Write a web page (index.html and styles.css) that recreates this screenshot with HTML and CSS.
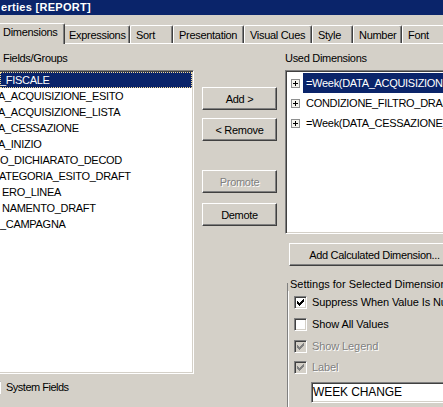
FILE: index.html
```
<!DOCTYPE html>
<html>
<head>
<meta charset="utf-8">
<title>Properties [REPORT]</title>
<link rel="stylesheet" href="styles.css">
</head>
<body>
<div class="window">
  <div class="titlebar"><span class="title">erties [REPORT]</span></div>
  <div class="tabstrip">
    <div class="tab sel w-dim">Dimensions</div>
    <div class="tab w-exp">Expressions</div>
    <div class="tab w-sort">Sort</div>
    <div class="tab w-pres">Presentation</div>
    <div class="tab w-vc">Visual Cues</div>
    <div class="tab w-style">Style</div>
    <div class="tab w-num">Number</div>
    <div class="tab w-font">Font</div>
  </div>
  <div class="panel">
    <div class="col-left">
      <div class="label">Fields/Groups</div>
      <div class="listbox fields">
        <div class="item selected">_FISCALE</div>
        <div class="item cut">A_ACQUISIZIONE_ESITO</div>
        <div class="item cut">A_ACQUISIZIONE_LISTA</div>
        <div class="item cut">A_CESSAZIONE</div>
        <div class="item cut">A_INIZIO</div>
        <div class="item">O_DICHIARATO_DECOD</div>
        <div class="item cut1">ATEGORIA_ESITO_DRAFT</div>
        <div class="item in">ERO_LINEA</div>
        <div class="item in">NAMENTO_DRAFT</div>
        <div class="item">_CAMPAGNA</div>
      </div>
      <div class="check-row sys">
        <span class="checkbox"></span>
        <span class="sys-text">System Fields</span>
      </div>
    </div>
    <div class="col-mid">
      <button class="btn b-add">Add &gt;</button>
      <button class="btn b-remove">&lt; Remove</button>
      <button class="btn b-promote disabled">Promote</button>
      <button class="btn b-demote">Demote</button>
    </div>
    <div class="col-right">
      <div class="label">Used Dimensions</div>
      <div class="listbox used">
        <div class="tree-row">
          <svg class="plus" width="9" height="9" viewBox="0 0 9 9"><rect x="0.5" y="0.5" width="8" height="8" fill="#f4f3ee" stroke="#8e8f8f"/><path d="M2 4h5v1H2z M4 2h1v5H4z" fill="#000"/></svg>
          <span class="node selected">=Week(DATA_ACQUISIZIONE_ESITO)</span>
        </div>
        <div class="tree-row">
          <svg class="plus" width="9" height="9" viewBox="0 0 9 9"><rect x="0.5" y="0.5" width="8" height="8" fill="#f4f3ee" stroke="#8e8f8f"/><path d="M2 4h5v1H2z M4 2h1v5H4z" fill="#000"/></svg>
          <span class="node">CONDIZIONE_FILTRO_DRAFT</span>
        </div>
        <div class="tree-row">
          <svg class="plus" width="9" height="9" viewBox="0 0 9 9"><rect x="0.5" y="0.5" width="8" height="8" fill="#f4f3ee" stroke="#8e8f8f"/><path d="M2 4h5v1H2z M4 2h1v5H4z" fill="#000"/></svg>
          <span class="node">=Week(DATA_CESSAZIONE)</span>
        </div>
      </div>
      <button class="btn b-calc">Add Calculated Dimension...</button>
      <div class="group">
        <span class="legend">Settings for Selected Dimension</span>
        <div class="check-row r1">
          <span class="checkbox"><svg width="7" height="7" viewBox="0 0 7 7"><path d="M0 2h1v3H0z M1 3h1v3H1z M2 4h1v3H2z M3 3h1v3H3z M4 2h1v3H4z M5 1h1v3H5z M6 0h1v3H6z" fill="#000"/></svg></span>
          <span>Suppress When Value Is Null</span>
        </div>
        <div class="check-row r2">
          <span class="checkbox"></span>
          <span>Show All Values</span>
        </div>
        <div class="check-row r3 disabled">
          <span class="checkbox"><svg width="7" height="7" viewBox="0 0 7 7"><path d="M0 2h1v3H0z M1 3h1v3H1z M2 4h1v3H2z M3 3h1v3H3z M4 2h1v3H4z M5 1h1v3H5z M6 0h1v3H6z" fill="#808080"/></svg></span>
          <span class="dis-text">Show Legend</span>
        </div>
        <div class="check-row r4 disabled">
          <span class="checkbox"><svg width="7" height="7" viewBox="0 0 7 7"><path d="M0 2h1v3H0z M1 3h1v3H1z M2 4h1v3H2z M3 3h1v3H3z M4 2h1v3H4z M5 1h1v3H5z M6 0h1v3H6z" fill="#808080"/></svg></span>
          <span class="dis-text">Label</span>
        </div>
        <div class="textbox">WEEK CHANGE</div>
      </div>
    </div>
  </div>
</div>
</body>
</html>
```

FILE: styles.css
```
html, body {
  margin: 0;
  padding: 0;
  overflow: hidden;
  background: #d4d0c8;
}

body {
  width: 443px;
  height: 407px;
  font-family: "Liberation Sans", Arial, sans-serif;
  font-size: 11px;
  letter-spacing: -0.3px;
  color: #000;
}

.window {
  width: 443px;
  height: 407px;
  overflow: hidden;
}

.titlebar {
  height: 15px;
  line-height: 15px;
  background: #0a246a;
  color: #fff;
  font-weight: bold;
  letter-spacing: 0.3px;
  padding-left: 1px;
  white-space: nowrap;
}

/* tabs */
.tabstrip {
  display: flex;
  align-items: flex-end;
  height: 28px;
  border-bottom: 1px solid #fff;
  white-space: nowrap;
}

.tab {
  flex: none;
  box-sizing: border-box;
  height: 18px;
  padding: 3px 0 1px 5px;
  line-height: 13px;
  border-top: 1px solid #fff;
  border-left: 1px solid #fff;
  border-right: 1px solid #404040;
  border-radius: 2px 2px 0 0;
  box-shadow: inset -1px 0 #808080;
  background: #d4d0c8;
}

.tab.sel {
  position: relative;
  z-index: 1;
  height: 21px;
  padding-top: 2px;
  padding-bottom: 5px;
  margin-bottom: -1px;
  margin-left: -3px;
  margin-right: -2px;
}

.w-dim { width: 68px; }
.w-exp { width: 67px; }
.w-sort { width: 43px; }
.w-pres { width: 71px; }
.w-vc { width: 68px; }
.w-style { width: 41px; }
.w-num { width: 49px; }
.w-font { width: 60px; }

/* panel */
.panel {
  display: flex;
  padding-top: 8px;
  white-space: nowrap;
}

.label {
  height: 13px;
  line-height: 13px;
  margin-bottom: 5px;
}

.col-left {
  flex: none;
  width: 194px;
}

.col-left .label {
  padding-left: 3px;
}

.listbox {
  box-sizing: border-box;
  background: #fff;
  border: 1px solid;
  border-color: #808080 #fff #fff #808080;
  box-shadow: inset 1px 1px #404040, inset -1px -1px #d4d0c8;
  padding: 1px;
  overflow: hidden;
}

.listbox.fields {
  width: 196px;
  height: 304px;
  margin-left: -2px;
}

.item {
  height: 16px;
  line-height: 16px;
  overflow: hidden;
}

.item.cut { text-indent: -2px; }
.item.cut1 { text-indent: -1px; }
.item.in { text-indent: 2px; }

.item.selected {
  background: #0a246a;
  color: #fff;
  outline: 1px dotted #f5db95;
  outline-offset: -1px;
}

.check-row {
  display: flex;
  align-items: center;
}

.check-row.sys {
  height: 16px;
  margin-top: 5px;
}

.check-row.sys .checkbox {
  margin-left: -12px;
  margin-right: 5px;
}

.sys-text {
  letter-spacing: -0.5px;
}

.checkbox {
  flex: none;
  box-sizing: border-box;
  width: 13px;
  height: 13px;
  display: flex;
  align-items: center;
  justify-content: center;
  background: #fff;
  border: 1px solid;
  border-color: #808080 #fff #fff #808080;
  box-shadow: inset 1px 1px #404040, inset -1px -1px #d4d0c8;
}

.checkbox svg {
  display: block;
  shape-rendering: crispEdges;
}

.disabled .checkbox {
  background: #d4d0c8;
}

.dis-text {
  color: #808080;
  text-shadow: 1px 1px 0 #fff;
}

/* middle buttons */
.col-mid {
  flex: none;
  width: 75px;
  margin-left: 8px;
  display: flex;
  flex-direction: column;
}

.btn {
  display: block;
  box-sizing: border-box;
  width: 75px;
  height: 23px;
  padding: 0;
  margin: 0;
  font: inherit;
  letter-spacing: inherit;
  color: #000;
  text-align: center;
  background: #d4d0c8;
  border: 1px solid;
  border-color: #fff #404040 #404040 #fff;
  box-shadow: inset -1px -1px #808080;
  border-radius: 0;
  white-space: nowrap;
}

.b-add { margin-top: 35px; }
.b-remove { margin-top: 8px; }
.b-promote { margin-top: 29px; }
.b-demote { margin-top: 10px; }

.btn.disabled {
  color: #808080;
  text-shadow: 1px 1px 0 #fff;
}

/* right column */
.col-right {
  flex: none;
  width: 210px;
  margin-left: 8px;
}

.listbox.used {
  width: 210px;
  height: 164px;
  padding-top: 2px;
}

.tree-row {
  display: flex;
  align-items: center;
  height: 20px;
}

.plus {
  flex: none;
  display: block;
  margin-left: 4px;
  margin-right: 3px;
  shape-rendering: crispEdges;
}

.node {
  height: 20px;
  line-height: 20px;
  padding: 0 3px;
}

.node.selected {
  background: #0a246a;
  color: #fff;
}

.b-calc {
  width: 171px;
  margin-top: 9px;
  margin-left: 4px;
}

.group {
  position: relative;
  margin-top: 17px;
  margin-left: 2px;
  height: 140px;
  border: 1px solid #808080;
  box-shadow: inset 1px 1px #fff;
  padding-top: 7px;
  letter-spacing: -0.1px;
}

.legend {
  position: absolute;
  top: -6px;
  left: 0;
  padding: 0 2px;
  line-height: 13px;
  background: #d4d0c8;
  letter-spacing: 0;
}

.group .check-row {
  height: 22px;
  padding-left: 6px;
}

.group .check-row .checkbox {
  margin-right: 5px;
}

.group .check-row.r4 {
  height: 20px;
}

.textbox {
  box-sizing: border-box;
  width: 200px;
  height: 21px;
  margin-top: 5px;
  margin-left: 23px;
  background: #fff;
  border: 1px solid;
  border-color: #808080 #fff #fff #808080;
  box-shadow: inset 1px 1px #404040, inset -1px -1px #d4d0c8;
  padding: 1px 1px 0 1px;
  font-size: 12px;
  letter-spacing: -0.1px;
  line-height: 17px;
}
```
